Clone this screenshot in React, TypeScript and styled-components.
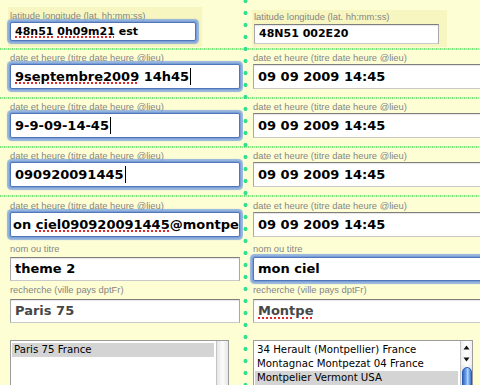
import React from "react";
import styled, { createGlobalStyle, css } from "styled-components";

const GlobalStyle = createGlobalStyle`
  html, body { margin: 0; padding: 0; }
  body {
    width: 480px;
    height: 385px;
    overflow: hidden;
    background: #fefed4;
    font-family: "DejaVu Sans", Verdana, sans-serif;
  }
`;

const dots = css`
  background-image: radial-gradient(circle at 2.5px 6px, #2fe08e 0 1.7px, rgba(47, 224, 142, 0) 2.3px);
  background-size: 5px 12px;
  background-repeat: repeat-y;
  background-attachment: fixed;
  background-position: 243px -5px;
`;

const Page = styled.div`
  display: flex;
  flex-direction: column;
  width: 480px;
  height: 385px;
  overflow: hidden;
`;

const Row = styled.div<{ $h?: number }>`
  display: grid;
  grid-template-columns: 243px 5px 232px;
  flex: none;
  height: ${(p) => (p.$h ? `${p.$h}px` : "auto")};
  ${(p) => !p.$h && css`flex: 1;`}
`;

const Divider = styled.div`
  ${dots}
`;

const Separator = styled.div`
  height: 2px;
  flex: none;
  background-image: radial-gradient(circle at 2.5px 6px, #2fe08e 0 1.7px, rgba(47, 224, 142, 0) 2.3px),
    repeating-linear-gradient(90deg, #74e474 0 1px, #c6f4bc 1px 2px, #9eeb95 2px 3px, #d8f8c8 3px 4px);
  background-size: 5px 12px, auto;
  background-repeat: repeat-y, repeat;
  background-attachment: fixed, scroll;
  background-position: 243px -5px, 0 0;
`;

const Cell = styled.div<{ $side: "left" | "right"; $pt?: number }>`
  min-width: 0;
  overflow: hidden;
  display: flex;
  flex-direction: column;
  align-items: flex-start;
  box-sizing: border-box;
  padding-top: ${(p) => p.$pt ?? 0}px;
  padding-left: ${(p) => (p.$side === "left" ? 8 : 4)}px;
`;

const Panel = styled.div<{ $w: number; $pad: string }>`
  box-sizing: border-box;
  width: ${(p) => p.$w}px;
  display: flex;
  flex-direction: column;
  align-items: flex-start;
  background: #f8f6c0;
  padding: ${(p) => p.$pad};
`;

const Group = styled.div<{ $inset: number; $mt?: number; $gap?: number }>`
  display: flex;
  flex-direction: column;
  align-items: flex-start;
  padding-left: ${(p) => p.$inset}px;
  margin-top: ${(p) => p.$mt ?? 0}px;
  gap: ${(p) => p.$gap ?? 0}px;
`;

const Label = styled.div<{ $mb?: number }>`
  font-family: "Liberation Sans", Arial, sans-serif;
  font-size: 9.4px;
  line-height: 12px;
  height: 12px;
  color: #858585;
  white-space: nowrap;
  margin-bottom: ${(p) => p.$mb ?? 0}px;
`;

const Field = styled.div<{
  $w: number;
  $h: number;
  $size?: number;
  $focus?: boolean;
  $muted?: boolean;
  $scrolled?: boolean;
}>`
  box-sizing: border-box;
  flex: none;
  width: ${(p) => p.$w}px;
  height: ${(p) => p.$h}px;
  display: flex;
  align-items: center;
  padding: 0 1px 0 ${(p) => (p.$scrolled ? 2 : 4)}px;
  overflow: hidden;
  white-space: nowrap;
  background: #fff;
  font-family: "DejaVu Sans", Verdana, sans-serif;
  font-weight: bold;
  font-size: ${(p) => p.$size ?? 13}px;
  color: ${(p) => (p.$muted ? "#474747" : "#000")};
  border: 1px solid #a8a8a8;
  border-top-color: #7e7e7e;
  border-bottom-color: #c9c9c9;
  box-shadow: inset 0 1px 1px rgba(0, 0, 0, 0.1);
  ${(p) =>
    p.$focus &&
    css`
      border-color: #5177b8;
      border-radius: 2px;
      box-shadow: 0 0 0 1px #7a9fd8, 0 0 1px 2.5px rgba(120, 160, 222, 0.8);
    `}
`;

const Text = styled.span`
  white-space: pre;
  display: inline-block;
  line-height: 18px;
`;

const Spell = styled.span`
  text-decoration-line: underline;
  text-decoration-style: dotted;
  text-decoration-color: #e02a2a;
  text-decoration-thickness: 2px;
  text-underline-offset: 2px;
`;

const Caret = styled.span`
  display: inline-block;
  width: 1px;
  height: 17px;
  background: #000;
  margin-left: 1px;
  vertical-align: -4px;
`;

const ListBox = styled.div<{ $w: number }>`
  box-sizing: border-box;
  width: ${(p) => p.$w}px;
  height: 62px;
  margin-top: 14px;
  border: 1px solid #9c9c9c;
  background: #fff;
  display: flex;
  flex: none;
`;

const Items = styled.div`
  flex: 1;
  min-width: 0;
  padding: 2px 2px 0 1px;
  display: flex;
  flex-direction: column;
`;

const Item = styled.div<{ $sel?: boolean }>`
  height: 14px;
  line-height: 14px;
  font-family: "DejaVu Sans", Verdana, sans-serif;
  font-size: 10.2px;
  color: #000;
  padding-left: 2px;
  white-space: nowrap;
  background: ${(p) => (p.$sel ? "#d4d4d4" : "transparent")};
`;

const Track = styled.div`
  width: 11px;
  flex: none;
  border-left: 1px solid #c4c4c4;
  background: linear-gradient(90deg, #e6e6e6, #fbfbfb 50%, #e6e6e6);
  display: flex;
  flex-direction: column;
  align-items: center;
`;

const Arrow = styled.div`
  width: 11px;
  height: 12px;
  display: flex;
  align-items: center;
  justify-content: center;
  background: linear-gradient(90deg, #f0f0f0, #ffffff 50%, #f0f0f0);
`;

const Thumb = styled.div`
  box-sizing: border-box;
  margin-top: 2px;
  width: 10px;
  flex: 1;
  border: 1px solid #2b5cb3;
  border-radius: 5px 5px 0 0;
  background: linear-gradient(90deg, #2f68cc 0%, #7fb1ee 45%, #b9d7f7 55%, #3a74d4 100%);
`;

const ArrowIcon = ({ up }: { up?: boolean }) => (
  <svg width="7" height="5" viewBox="0 0 7 5">
    <path d={up ? "M3.5 0.5 L6.5 4.5 L0.5 4.5 Z" : "M0.5 0.5 L6.5 0.5 L3.5 4.5 Z"} fill="#111" />
  </svg>
);

export default function App() {
  return (
    <>
      <GlobalStyle />
      <Page>
        <Row $h={48}>
          <Cell $side="left" $pt={7}>
            <Panel $w={194} $pad="3px 0 6px 2px">
              <Label>latitude longitude (lat. hh:mm:ss)</Label>
              <Field $w={186} $h={19} $size={11} $focus>
                <Text>
                  <Spell>48n51</Spell>{" "}<Spell>0h09m21</Spell>{" est"}
                </Text>
              </Field>
            </Panel>
          </Cell>
          <Divider />
          <Cell $side="right" $pt={10}>
            <Panel $w={195} $pad="1px 0 3px 2px">
              <Label $mb={1}>latitude longitude (lat. hh:mm:ss)</Label>
              <Field $w={185} $h={20} $size={11}>
                <Text>48N51 002E20</Text>
              </Field>
            </Panel>
          </Cell>
        </Row>
        <Separator />
        <Row $h={47}>
          <Cell $side="left" $pt={2}>
            <Group $inset={2}>
              <Label>date et heure (titre date heure @lieu)</Label>
              <Field $w={230} $h={25} $focus>
                <Text>
                  <Spell>9septembre2009</Spell>{" 14h45"}
                  <Caret />
                </Text>
              </Field>
            </Group>
          </Cell>
          <Divider />
          <Cell $side="right" $pt={2}>
            <Group $inset={1}>
              <Label>date et heure (titre date heure @lieu)</Label>
              <Field $w={240} $h={25}>
                <Text>09 09 2009 14:45</Text>
              </Field>
            </Group>
          </Cell>
        </Row>
        <Separator />
        <Row $h={47}>
          <Cell $side="left" $pt={2}>
            <Group $inset={2}>
              <Label>date et heure (titre date heure @lieu)</Label>
              <Field $w={230} $h={25} $focus>
                <Text>
                  9-9-09-14-45
                  <Caret />
                </Text>
              </Field>
            </Group>
          </Cell>
          <Divider />
          <Cell $side="right" $pt={2}>
            <Group $inset={1}>
              <Label>date et heure (titre date heure @lieu)</Label>
              <Field $w={240} $h={25}>
                <Text>09 09 2009 14:45</Text>
              </Field>
            </Group>
          </Cell>
        </Row>
        <Separator />
        <Row $h={47}>
          <Cell $side="left" $pt={2}>
            <Group $inset={2}>
              <Label>date et heure (titre date heure @lieu)</Label>
              <Field $w={230} $h={25} $focus>
                <Text>
                  090920091445
                  <Caret />
                </Text>
              </Field>
            </Group>
          </Cell>
          <Divider />
          <Cell $side="right" $pt={2}>
            <Group $inset={1}>
              <Label>date et heure (titre date heure @lieu)</Label>
              <Field $w={240} $h={25}>
                <Text>09 09 2009 14:45</Text>
              </Field>
            </Group>
          </Cell>
        </Row>
        <Separator />
        <Row>
          <Cell $side="left" $pt={3}>
            <Group $inset={2}>
              <Label>date et heure (titre date heure @lieu)</Label>
              <Field $w={230} $h={25} $focus $scrolled>
                <Text>
                  {"on "}<Spell>ciel090920091445</Spell>@montpe
                </Text>
              </Field>
            </Group>
            <Group $inset={2} $mt={6} $gap={2}>
              <Label>nom ou titre</Label>
              <Field $w={230} $h={24}>
                <Text>theme 2</Text>
              </Field>
            </Group>
            <Group $inset={2} $mt={3} $gap={3}>
              <Label>recherche (ville pays dptFr)</Label>
              <Field $w={230} $h={24} $muted>
                <Text>Paris 75</Text>
              </Field>
              <ListBox $w={219}>
                <Items>
                  <Item $sel>Paris 75 France</Item>
                </Items>
                <Track />
              </ListBox>
            </Group>
          </Cell>
          <Divider />
          <Cell $side="right" $pt={3}>
            <Group $inset={1}>
              <Label>date et heure (titre date heure @lieu)</Label>
              <Field $w={240} $h={25}>
                <Text>09 09 2009 14:45</Text>
              </Field>
            </Group>
            <Group $inset={1} $mt={6} $gap={2}>
              <Label>nom ou titre</Label>
              <Field $w={240} $h={24} $focus>
                <Text>mon ciel</Text>
              </Field>
            </Group>
            <Group $inset={1} $mt={3} $gap={3}>
              <Label>recherche (ville pays dptFr)</Label>
              <Field $w={240} $h={24} $muted>
                <Text>
                  <Spell>Montpe</Spell>
                </Text>
              </Field>
              <ListBox $w={220}>
                <Items>
                  <Item>34 Herault (Montpellier) France</Item>
                  <Item>Montagnac Montpezat 04 France</Item>
                  <Item $sel>Montpelier Vermont USA</Item>
                </Items>
                <Track>
                  <Arrow>
                    <ArrowIcon up />
                  </Arrow>
                  <Arrow>
                    <ArrowIcon />
                  </Arrow>
                  <Thumb />
                </Track>
              </ListBox>
            </Group>
          </Cell>
        </Row>
      </Page>
    </>
  );
}
